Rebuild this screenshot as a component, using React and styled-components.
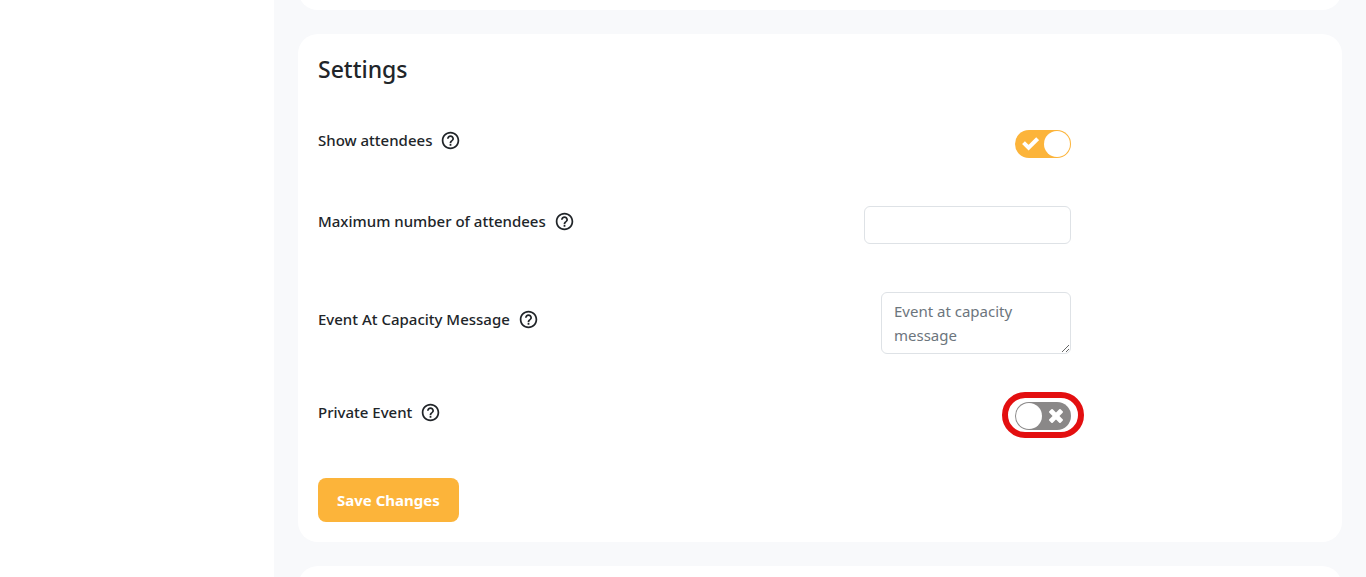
import React, { useState } from "react"
import styled, { createGlobalStyle } from "styled-components"
import { MdHelpOutline } from "react-icons/md"

const GlobalStyle = createGlobalStyle`
  *, *::before, *::after {
    box-sizing: border-box;
  }

  body {
    margin: 0;
    background: #fff;
    color: #212529;
    font-family: "Segoe UI", "Noto Sans", "Open Sans", sans-serif;
  }
`

//===============================================================

const CheckIcon = () => (
  <svg width="17" height="14" viewBox="0 0 17 14" aria-hidden="true">
    <path
      d="M1.5 5.6 L6.6 10.7 L15.6 1.7"
      fill="none"
      stroke="currentColor"
      strokeWidth="4"
    />
  </svg>
)

const CrossIcon = () => (
  <svg width="14" height="14" viewBox="0 0 14 14" aria-hidden="true">
    <g fill="currentColor">
      <rect
        x="-1"
        y="4.6"
        width="16"
        height="4.8"
        rx="1"
        transform="rotate(45 7 7)"
      />
      <rect
        x="-1"
        y="4.6"
        width="16"
        height="4.8"
        rx="1"
        transform="rotate(-45 7 7)"
      />
    </g>
  </svg>
)

const Help = ({ topic }) => (
  <HelpButton type="button" aria-label={`Help: ${topic}`}>
    <MdHelpOutline size={21} />
  </HelpButton>
)

const Field = ({ id, label, children }) => (
  <Row>
    <LabelGroup>
      <Label htmlFor={id}>{label}</Label>
      <Help topic={label} />
    </LabelGroup>
    {children}
  </Row>
)

const Toggle = ({ id, defaultChecked = false, highlighted }) => {
  const [checked, setChecked] = useState(defaultChecked)

  return (
    <Switch $on={checked} $highlighted={highlighted}>
      <SwitchInput
        id={id}
        type="checkbox"
        role="switch"
        checked={checked}
        onChange={e => setChecked(e.target.checked)}
      />
      <Knob />
      <SwitchIcon>{checked ? <CheckIcon /> : <CrossIcon />}</SwitchIcon>
    </Switch>
  )
}

const App = () => (
  <>
    <GlobalStyle />
    <Layout>
      <Sidebar />
      <Main>
        <PreviousCard />
        <Card>
          <Title>Settings</Title>
          <Form onSubmit={e => e.preventDefault()}>
            <Field id="show-attendees" label="Show attendees">
              <Toggle id="show-attendees" defaultChecked />
            </Field>
            <Field id="max-attendees" label="Maximum number of attendees">
              <TextInput id="max-attendees" type="text" />
            </Field>
            <Field id="capacity-message" label="Event At Capacity Message">
              <TextArea
                id="capacity-message"
                rows={2}
                placeholder="Event at capacity message"
              />
            </Field>
            <Field id="private-event" label="Private Event">
              <Toggle id="private-event" highlighted />
            </Field>
            <SaveButton type="submit">Save Changes</SaveButton>
          </Form>
        </Card>
        <NextCard />
      </Main>
    </Layout>
  </>
)

export default App

//================================================

const Layout = styled.div`
  display: flex;
  height: 100vh;
  overflow: hidden;
`

const Sidebar = styled.aside`
  flex: 0 0 274px;
  background: #fff;
`

const Main = styled.main`
  flex: 1;
  min-width: 0;
  display: flex;
  flex-direction: column;
  gap: 24px;
  padding: 0 24px;
  background: #f8f9fb;
`

const Card = styled.section`
  flex-shrink: 0;
  padding: 20px;
  border-radius: 20px;
  background: #fff;
`

/* only its lower edge is scrolled into view */
const PreviousCard = styled(Card)`
  margin-top: -30px;
`

const NextCard = styled(Card)`
  padding: 40px;
`

const Title = styled.h2`
  margin: 0 0 46px;
  font-size: 23px;
  font-weight: 500;
  line-height: 30px;
`

const Form = styled.form`
  display: flex;
  flex-direction: column;
  align-items: flex-start;
  gap: 48px;
`

const Row = styled.div`
  display: flex;
  align-items: center;
  justify-content: space-between;
  width: 75%;
`

const LabelGroup = styled.div`
  display: flex;
  align-items: center;
  gap: 8px;
  height: 28px;
  padding-bottom: 8px;
`

const Label = styled.label`
  font-size: 15px;
  font-weight: 500;
  line-height: 20px;
`

const HelpButton = styled.button`
  display: flex;
  padding: 0;
  border: 0;
  background: none;
  color: #212529;
  cursor: pointer;
`

const Switch = styled.span`
  position: relative;
  display: flex;
  flex-direction: ${props => (props.$on ? "row-reverse" : "row")};
  align-items: center;
  width: 56px;
  height: 28px;
  padding: 1px;
  border-radius: 14px;
  background: ${props => (props.$on ? "#fcb43a" : "#8a8888")};

  ${props =>
    props.$highlighted &&
    `
    &::after {
      content: "";
      position: absolute;
      inset: -10px -13px -8px;
      border: 6px solid #e30f10;
      border-radius: 23px;
      pointer-events: none;
    }
  `}
`

const SwitchInput = styled.input`
  position: absolute;
  inset: 0;
  width: 100%;
  height: 100%;
  margin: 0;
  opacity: 0;
  cursor: pointer;
`

const Knob = styled.span`
  width: 26px;
  height: 26px;
  border-radius: 50%;
  background: #fff;
  pointer-events: none;
`

const SwitchIcon = styled.span`
  flex: 1;
  display: flex;
  justify-content: center;
  color: #fff;
  pointer-events: none;
`

const TextInput = styled.input`
  width: 207px;
  height: 38px;
  padding: 6px 12px;
  border: 1px solid #dee2e6;
  border-radius: 6px;
  background: #fff;
  color: #212529;
  font-family: inherit;
  font-size: 15px;
  line-height: 24px;
`

const TextArea = styled.textarea`
  display: block;
  width: 190px;
  height: 62px;
  padding: 6px 12px;
  border: 1px solid #dee2e6;
  border-radius: 6px;
  background: #fff;
  color: #212529;
  font-family: inherit;
  font-size: 15px;
  line-height: 24px;
  resize: vertical;

  &::placeholder {
    color: #6c757d;
    opacity: 1;
  }
`

const SaveButton = styled.button`
  height: 44px;
  padding: 0 19px;
  border: 0;
  border-radius: 8px;
  background: #fcb43a;
  color: #fff;
  font-family: inherit;
  font-size: 15px;
  font-weight: 700;
  line-height: 24px;
  cursor: pointer;
`
